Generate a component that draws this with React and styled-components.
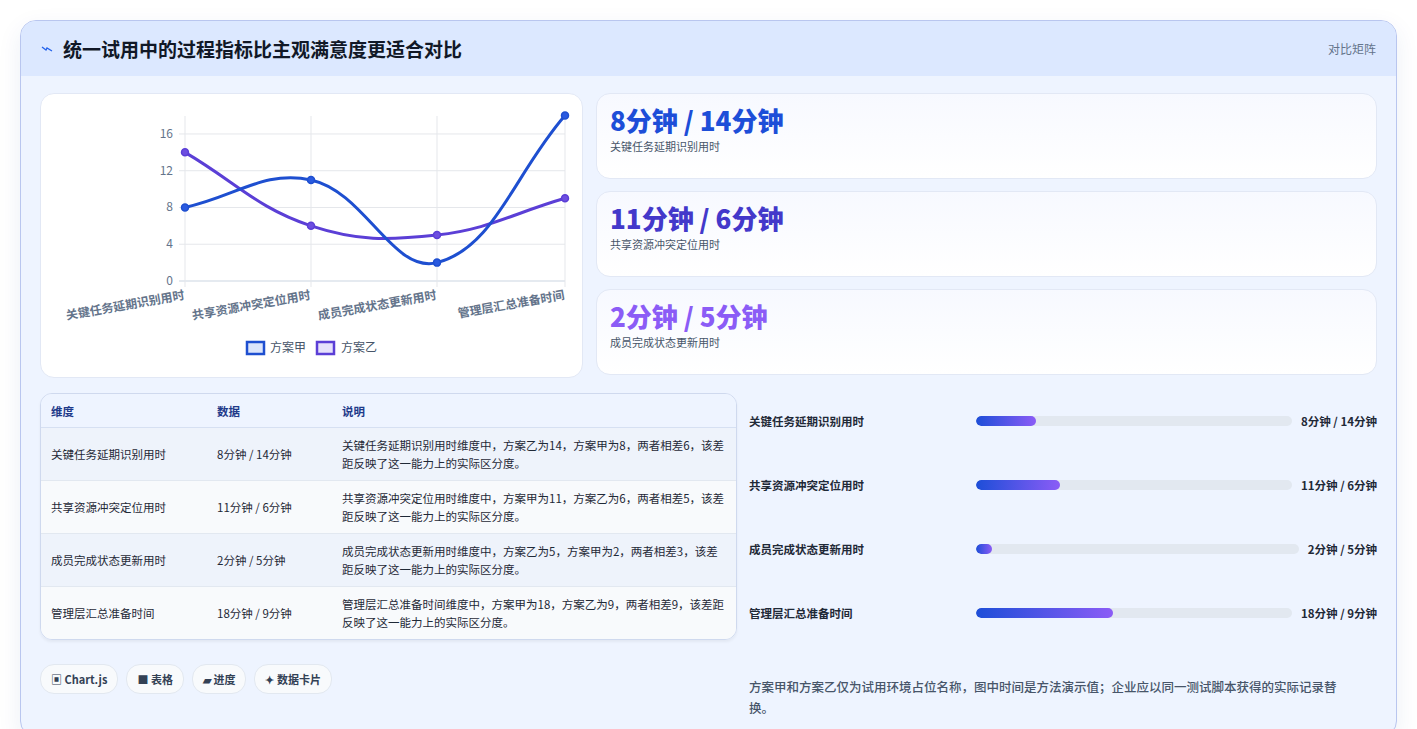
import React from "react";
import styled, { createGlobalStyle } from "styled-components";

const Global = createGlobalStyle`
  body { margin: 0; background: #fff; font-family: "Noto Sans CJK SC", "Noto Sans", sans-serif; }
`;

const Page = styled.div`
  padding: 20px 20px 20px 20px;
`;

const Panel = styled.div`
  border: 1px solid #b9c6ef;
  border-radius: 16px;
  background: #eef4ff;
  overflow: hidden;
  box-shadow: 0 8px 24px rgba(30, 58, 138, 0.08);
`;

const Header = styled.div`
  height: 55px;
  background: #dce8ff;
  display: flex;
  align-items: center;
  justify-content: space-between;
  padding: 0 20px 0 20px;
`;

const Title = styled.h1`
  margin: 0;
  font-size: 19px;
  font-weight: 700;
  color: #111827;
  display: flex;
  align-items: center;
  gap: 10px;
`;

const Tag = styled.span`
  font-size: 12px;
  color: #64748b;
`;

const Body = styled.div`
  padding: 17px 19px 18px 19px;
  display: flex;
  flex-direction: column;
  gap: 15px;
`;

const TopRow = styled.div`
  display: grid;
  grid-template-columns: 543px 1fr;
  gap: 13px;
`;

const ChartCard = styled.div`
  background: #fff;
  border: 1px solid #e2e8f5;
  border-radius: 14px;
  height: 283px;
`;

const Stats = styled.div`
  display: flex;
  flex-direction: column;
  gap: 12px;
`;

const Stat = styled.div`
  height: 86px;
  box-sizing: border-box;
  background: linear-gradient(180deg, #f7f9ff, #fff);
  border: 1px solid #e2e8f5;
  border-radius: 14px;
  padding: 8px 13px;
`;

const StatValue = styled.div`
  font-size: 26px;
  font-weight: 800;
  line-height: 36px;
  color: ${p => p.color};
`;

const StatLabel = styled.div`
  font-size: 11px;
  color: #475569;
`;

const BottomRow = styled.div`
  display: grid;
  grid-template-columns: 697px 1fr;
  gap: 12px;
`;

const LeftCol = styled.div`
  display: flex;
  flex-direction: column;
  gap: 24px;
`;

const Table = styled.table`
  width: 100%;
  border-collapse: separate;
  border-spacing: 0;
  border: 1px solid #cfd9ee;
  border-radius: 12px;
  overflow: hidden;
  font-size: 11.5px;
  color: #1f2937;
  box-shadow: 0 2px 3px rgba(0,0,0,0.05);
`;

const Th = styled.th`
  text-align: left;
  font-weight: 700;
  color: #1e3a8a;
  background: #eef4ff;
  padding: 0 10px;
  height: 33px;
  border-bottom: 1px solid #d6e0f2;
  width: ${p => p.w || "auto"};
`;

const Td = styled.td`
  padding: 0 10px;
  height: 52px;
  line-height: 18px;
  vertical-align: middle;
  background: ${p => (p.odd ? "#f8fafc" : "#eef3fb")};
  border-top: ${p => (p.first ? "none" : "1px solid #e2e8f0")};
`;

const Chips = styled.div`
  display: flex;
  gap: 8px;
`;

const Chip = styled.span`
  font-size: 11px;
  font-weight: 700;
  color: #334155;
  background: #f8fafc;
  border: 1px solid #e2e8f0;
  border-radius: 14px;
  padding: 6px 10px;
`;

const RightCol = styled.div`
  padding-top: 19px;
  display: flex;
  flex-direction: column;
`;

const BarRow = styled.div`
  height: 64px;
  display: flex;
  align-items: flex-start;
  font-size: 11.5px;
  font-weight: 700;
  color: #1f2937;
`;

const BarLabel = styled.div`
  width: 227px;
  line-height: 18px;
`;

const Track = styled.div`
  flex: 1;
  height: 10px;
  margin-top: 4px;
  background: #e2e8f0;
  border-radius: 6px;
  overflow: hidden;
`;

const Fill = styled.div`
  height: 100%;
  border-radius: 6px;
  background: linear-gradient(90deg, #1d4ed8, #8b5cf6);
`;

const BarValue = styled.div`
  margin-left: 9px;
  line-height: 18px;
`;

const Note = styled.p`
  margin: 8px 0 0;
  font-size: 12.5px;
  line-height: 21px;
  color: #475569;
  font-weight: 500;
  padding-right: 20px;
`;

const rows = [
  ["关键任务延期识别用时", "8分钟 / 14分钟", "关键任务延期识别用时维度中，方案乙为14，方案甲为8，两者相差6，该差距反映了这一能力上的实际区分度。", 19],
  ["共享资源冲突定位用时", "11分钟 / 6分钟", "共享资源冲突定位用时维度中，方案甲为11，方案乙为6，两者相差5，该差距反映了这一能力上的实际区分度。", 26.5],
  ["成员完成状态更新用时", "2分钟 / 5分钟", "成员完成状态更新用时维度中，方案乙为5，方案甲为2，两者相差3，该差距反映了这一能力上的实际区分度。", 5],
  ["管理层汇总准备时间", "18分钟 / 9分钟", "管理层汇总准备时间维度中，方案甲为18，方案乙为9，两者相差9，该差距反映了这一能力上的实际区分度。", 43.5],
];

const X = [144, 270, 396, 524];
const yv = v => 187 - v * 9.19;

function path(vals) {
  const pts = vals.map((v, i) => [X[i], yv(v)]);
  const t = 0.4;
  const cps = pts.map((p, i) => {
    const prev = pts[i - 1] || p;
    const next = pts[i + 1] || p;
    const d01 = Math.hypot(p[0] - prev[0], p[1] - prev[1]);
    const d12 = Math.hypot(next[0] - p[0], next[1] - p[1]);
    const s = d01 + d12 || 1;
    const fa = (t * d01) / s, fb = (t * d12) / s;
    return {
      prev: [p[0] - fa * (next[0] - prev[0]), p[1] - fa * (next[1] - prev[1])],
      next: [p[0] + fb * (next[0] - prev[0]), p[1] + fb * (next[1] - prev[1])],
    };
  });
  let d = `M${pts[0][0]},${pts[0][1]}`;
  for (let i = 1; i < pts.length; i++) {
    d += ` C${cps[i - 1].next[0]},${cps[i - 1].next[1]} ${cps[i].prev[0]},${cps[i].prev[1]} ${pts[i][0]},${pts[i][1]}`;
  }
  return { d, pts };
}

const Chart = () => {
  const a = path([8, 11, 2, 18]);
  const b = path([14, 6, 5, 9]);
  const labels = ["关键任务延期识别用时", "共享资源冲突定位用时", "成员完成状态更新用时", "管理层汇总准备时间"];
  return (
    <svg width="541" height="281" style={{ display: "block" }} fontFamily="Noto Sans CJK SC, sans-serif">
      {[0, 4, 8, 12, 16].map(v => (
        <g key={v}>
          <line x1="138" x2="524" y1={yv(v)} y2={yv(v)} stroke={v === 0 ? "#cbd5e1" : "#e5e7eb"} />
          <text x="132" y={yv(v) + 4} fontSize="12" fill="#64748b" textAnchor="end">{v}</text>
        </g>
      ))}
      {X.map(x => <line key={x} x1={x} x2={x} y1="22" y2="193" stroke="#e5e7eb" />)}
      {labels.map((l, i) => (
        <text key={l} transform={`translate(${X[i]},${205}) rotate(-10)`} textAnchor="end" fontSize="12" fontWeight="700" fill="#64748b">{l}</text>
      ))}
      <path d={b.d} fill="none" stroke="#5b3fd6" strokeWidth="3" />
      <path d={a.d} fill="none" stroke="#1e4fd0" strokeWidth="3" />
      {b.pts.map((p, i) => <circle key={"b" + i} cx={p[0]} cy={p[1]} r="3.5" fill="#6d4ee0" stroke="#5b3fd6" strokeWidth="1.5" />)}
      {a.pts.map((p, i) => <circle key={"a" + i} cx={p[0]} cy={p[1]} r="3.5" fill="#2a5ae0" stroke="#1e4fd0" strokeWidth="1.5" />)}
      <rect x="206" y="248" width="17" height="12" fill="#dbe5fb" stroke="#1e4fd0" strokeWidth="2.5" />
      <text x="229" y="258" fontSize="12" fill="#475569">方案甲</text>
      <rect x="276" y="248" width="17" height="12" fill="#e6e1fb" stroke="#5b3fd6" strokeWidth="2.5" />
      <text x="300" y="258" fontSize="12" fill="#475569">方案乙</text>
    </svg>
  );
};

export default function App() {
  return (
    <Page>
      <Global />
      <Panel>
        <Header>
          <Title>
            <svg width="12" height="8" viewBox="0 0 12 8">
              <path d="M1 2 L5 5 L6 3 L11 6" fill="none" stroke="#2563eb" strokeWidth="1.3" />
            </svg>
            统一试用中的过程指标比主观满意度更适合对比
          </Title>
          <Tag>对比矩阵</Tag>
        </Header>
        <Body>
          <TopRow>
            <ChartCard><Chart /></ChartCard>
            <Stats>
              <Stat><StatValue color="#1d4ed8">8分钟 / 14分钟</StatValue><StatLabel>关键任务延期识别用时</StatLabel></Stat>
              <Stat><StatValue color="#4338ca">11分钟 / 6分钟</StatValue><StatLabel>共享资源冲突定位用时</StatLabel></Stat>
              <Stat><StatValue color="#8b5cf6">2分钟 / 5分钟</StatValue><StatLabel>成员完成状态更新用时</StatLabel></Stat>
            </Stats>
          </TopRow>
          <BottomRow>
            <LeftCol>
              <Table>
                <thead>
                  <tr><Th w="146px">维度</Th><Th w="105px">数据</Th><Th>说明</Th></tr>
                </thead>
                <tbody>
                  {rows.map((r, i) => (
                    <tr key={r[0]}>
                      <Td odd={i % 2} first={i === 0}>{r[0]}</Td>
                      <Td odd={i % 2} first={i === 0}>{r[1]}</Td>
                      <Td odd={i % 2} first={i === 0}>{r[2]}</Td>
                    </tr>
                  ))}
                </tbody>
              </Table>
              <Chips>
                <Chip>▣ Chart.js</Chip>
                <Chip>■ 表格</Chip>
                <Chip>▰ 进度</Chip>
                <Chip>✦ 数据卡片</Chip>
              </Chips>
            </LeftCol>
            <RightCol>
              {rows.map(r => (
                <BarRow key={r[0]}>
                  <BarLabel>{r[0]}</BarLabel>
                  <Track><Fill style={{ width: `${r[3]}%` }} /></Track>
                  <BarValue>{r[1]}</BarValue>
                </BarRow>
              ))}
              <Note>方案甲和方案乙仅为试用环境占位名称，图中时间是方法演示值；企业应以同一测试脚本获得的实际记录替换。</Note>
            </RightCol>
          </BottomRow>
        </Body>
      </Panel>
    </Page>
  );
}
